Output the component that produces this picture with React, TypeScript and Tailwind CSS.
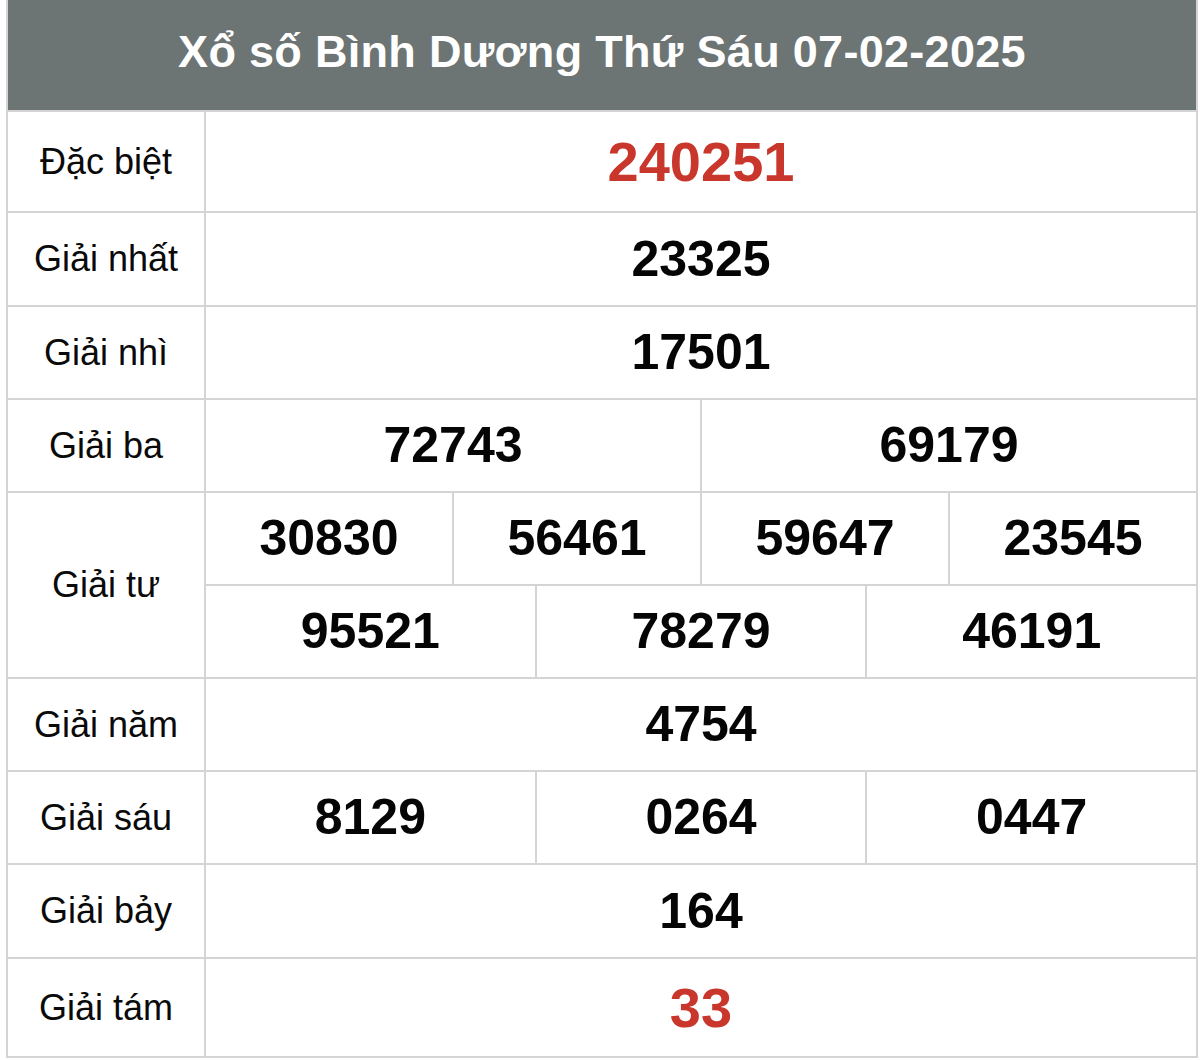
import React from 'react';

type Row = { label: string; lines: string[][]; red?: boolean; h: string };

const rows: Row[] = [
  { label: 'Đặc biệt', lines: [['240251']], red: true, h: 'h-[101px]' },
  { label: 'Giải nhất', lines: [['23325']], h: 'h-[94px]' },
  { label: 'Giải nhì', lines: [['17501']], h: 'h-[93px]' },
  { label: 'Giải ba', lines: [['72743', '69179']], h: 'h-[93px]' },
  {
    label: 'Giải tư',
    lines: [
      ['30830', '56461', '59647', '23545'],
      ['95521', '78279', '46191'],
    ],
    h: 'h-[186px]',
  },
  { label: 'Giải năm', lines: [['4754']], h: 'h-[93px]' },
  { label: 'Giải sáu', lines: [['8129', '0264', '0447']], h: 'h-[93px]' },
  { label: 'Giải bảy', lines: [['164']], h: 'h-[94px]' },
  { label: 'Giải tám', lines: [['33']], red: true, h: 'h-[99px]' },
];

export default function App() {
  return (
    <div className="w-[1200px] h-[1060px] bg-white font-['Liberation_Sans',Arial,sans-serif]">
      <div className="ml-[6px] w-[1192px] border-x-2 border-b-2 border-[#d4d4d4]">
        {/* Header */}
        <div className="h-[110px] bg-[#6c7474] flex items-center justify-center pb-[6px]">
          <h1 className="text-white font-bold text-[45px] tracking-[0.3px]">
            Xổ số Bình Dương Thứ Sáu 07-02-2025
          </h1>
        </div>

        {rows.map((row) => (
          <div key={row.label} className={`flex border-t-2 border-[#d4d4d4] ${row.h}`}>
            <div className="w-[198px] shrink-0 border-r-2 border-[#d4d4d4] flex items-center justify-center">
              <span className="text-[36px] text-[#0a0a0a]">{row.label}</span>
            </div>
            <div className="flex-1 flex flex-col">
              {row.lines.map((line, i) => (
                <div
                  key={i}
                  className={`flex flex-1 ${i > 0 ? 'border-t-2 border-[#d4d4d4]' : ''}`}
                >
                  {line.map((num, j) => (
                    <div
                      key={j}
                      className={`flex-1 flex items-center justify-center ${
                        j > 0 ? 'border-l-2 border-[#d4d4d4]' : ''
                      }`}
                    >
                      <span
                        className={
                          row.red
                            ? 'font-bold text-[56px] text-[#c9372c]'
                            : 'font-bold text-[50px] text-[#050505]'
                        }
                      >
                        {num}
                      </span>
                    </div>
                  ))}
                </div>
              ))}
            </div>
          </div>
        ))}
      </div>
    </div>
  );
}
